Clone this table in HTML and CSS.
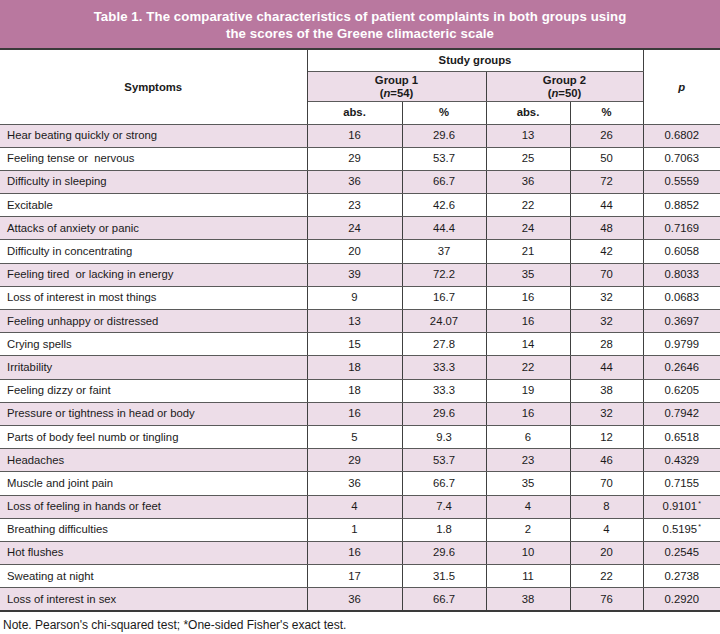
FILE: index.html
```html
<!DOCTYPE html>
<html lang="en">
<head>
<meta charset="utf-8">
<title>Table 1</title>
<link rel="stylesheet" href="styles.css">
</head>
<body>
<div class="title">Table 1. The comparative characteristics of patient complaints in both groups using<br>the scores of the Greene climacteric scale</div>
<table class="data">
  <colgroup>
    <col class="c-sym"><col class="c-a"><col class="c-b"><col class="c-c"><col class="c-d"><col class="c-p">
  </colgroup>
  <thead>
    <tr class="h1">
      <th rowspan="3" class="sym-h">Symptoms</th>
      <th colspan="4">Study groups</th>
      <th rowspan="3" class="p-h"><i>p</i></th>
    </tr>
    <tr class="h2">
      <th colspan="2">Group 1<br>(<i>n</i>=54)</th>
      <th colspan="2">Group 2<br>(<i>n</i>=50)</th>
    </tr>
    <tr class="h3">
      <th>abs.</th><th>%</th><th>abs.</th><th>%</th>
    </tr>
  </thead>
  <tbody>
    <tr><td>Hear beating quickly or strong</td><td>16</td><td>29.6</td><td>13</td><td>26</td><td>0.6802</td></tr>
    <tr><td>Feeling tense or&nbsp; nervous</td><td>29</td><td>53.7</td><td>25</td><td>50</td><td>0.7063</td></tr>
    <tr><td>Difficulty in sleeping</td><td>36</td><td>66.7</td><td>36</td><td>72</td><td>0.5559</td></tr>
    <tr><td>Excitable</td><td>23</td><td>42.6</td><td>22</td><td>44</td><td>0.8852</td></tr>
    <tr><td>Attacks of anxiety or panic</td><td>24</td><td>44.4</td><td>24</td><td>48</td><td>0.7169</td></tr>
    <tr><td>Difficulty in concentrating</td><td>20</td><td>37</td><td>21</td><td>42</td><td>0.6058</td></tr>
    <tr><td>Feeling tired&nbsp; or lacking in energy</td><td>39</td><td>72.2</td><td>35</td><td>70</td><td>0.8033</td></tr>
    <tr><td>Loss of interest in most things</td><td>9</td><td>16.7</td><td>16</td><td>32</td><td>0.0683</td></tr>
    <tr><td>Feeling unhappy or distressed</td><td>13</td><td>24.07</td><td>16</td><td>32</td><td>0.3697</td></tr>
    <tr><td>Crying spells</td><td>15</td><td>27.8</td><td>14</td><td>28</td><td>0.9799</td></tr>
    <tr><td>Irritability</td><td>18</td><td>33.3</td><td>22</td><td>44</td><td>0.2646</td></tr>
    <tr><td>Feeling dizzy or faint</td><td>18</td><td>33.3</td><td>19</td><td>38</td><td>0.6205</td></tr>
    <tr><td>Pressure or tightness in head or body</td><td>16</td><td>29.6</td><td>16</td><td>32</td><td>0.7942</td></tr>
    <tr><td>Parts of body feel numb or tingling</td><td>5</td><td>9.3</td><td>6</td><td>12</td><td>0.6518</td></tr>
    <tr><td>Headaches</td><td>29</td><td>53.7</td><td>23</td><td>46</td><td>0.4329</td></tr>
    <tr><td>Muscle and joint pain</td><td>36</td><td>66.7</td><td>35</td><td>70</td><td>0.7155</td></tr>
    <tr><td>Loss of feeling in hands or feet</td><td>4</td><td>7.4</td><td>4</td><td>8</td><td>0.9101<sup>*</sup></td></tr>
    <tr><td>Breathing difficulties</td><td>1</td><td>1.8</td><td>2</td><td>4</td><td>0.5195<sup>*</sup></td></tr>
    <tr><td>Hot flushes</td><td>16</td><td>29.6</td><td>10</td><td>20</td><td>0.2545</td></tr>
    <tr><td>Sweating at night</td><td>17</td><td>31.5</td><td>11</td><td>22</td><td>0.2738</td></tr>
    <tr><td>Loss of interest in sex</td><td>36</td><td>66.7</td><td>38</td><td>76</td><td>0.2920</td></tr>
  </tbody>
</table>
<p class="note">Note. Pearson's chi-squared test; *One-sided Fisher's exact test.</p>
</body>
</html>
```

FILE: styles.css
```css
html, body {
  margin: 0;
  padding: 0;
  background: #ffffff;
}
body {
  font-family: "Liberation Sans", Arial, sans-serif;
  color: #1a1a1a;
  width: 720px;
}
.title {
  background: #b9789f;
  color: #ffffff;
  font-weight: bold;
  font-size: 13.2px;
  line-height: 17px;
  text-align: center;
  height: 48px;
  box-sizing: border-box;
  padding-top: 8px;
  letter-spacing: 0.1px;
}
.data {
  width: 720px;
  table-layout: fixed;
  border-collapse: collapse;
  border-top: 2px solid #3a3a3a;
  border-bottom: 2px solid #3a3a3a;
  font-size: 11.3px;
}
.c-sym { width: 307px; }
.c-a { width: 95px; }
.c-b { width: 84px; }
.c-c { width: 84px; }
.c-d { width: 73px; }
.c-p { width: 77px; }
.data th, .data td {
  border-top: 1px solid #5a5a5a;
  border-bottom: 1px solid #5a5a5a;
  border-left: 1px solid #404040;
  border-right: 1px solid #404040;
  padding: 0;
  text-align: center;
  vertical-align: middle;
}
.data tr > :first-child { border-left: none; }
.data tr > :last-child { border-right: none; }
.data .h2 > :first-child,
.data .h3 > :first-child { border-left: 1px solid #404040; }
.data .h2 > :last-child,
.data .h3 > :last-child { border-right: 1px solid #404040; }
.data th {
  font-weight: bold;
  font-size: 11.3px;
  line-height: 13.5px;
  background: #ffffff;
}
.h1 { height: 22px; }
.h1 th { padding-top: 1px; }
.h2 { height: 30px; }
.h2 th { background: #eddde8; padding-top: 2px; }
.h3 { height: 23px; }
.data td {
  height: 22.2px;
  line-height: 13px;
}
.data tbody tr:nth-child(odd) td { background: #eddde8; }
.data tbody td:first-child {
  text-align: left;
  padding-left: 7px;
}
.data sup {
  font-size: 7px;
  line-height: 0;
  vertical-align: 4px;
  margin-left: 1px;
}
.note {
  margin: 6px 0 0 3px;
  font-size: 12px;
  line-height: 14px;
}
```
